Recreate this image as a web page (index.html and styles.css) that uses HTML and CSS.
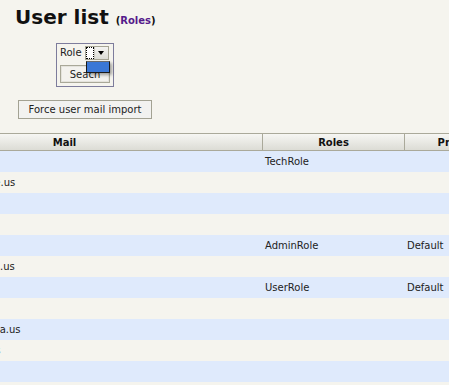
FILE: index.html
```html
<!DOCTYPE html>
<html>
<head>
<meta charset="utf-8">
<title>User list</title>
<link rel="stylesheet" href="styles.css">
</head>
<body>
<div class="page">
  <h1 class="title">User list <span class="sub">(<a href="#" class="sub-link">Roles</a>)</span></h1>

  <form class="filter">
    <div class="filter-row">
      <label class="filter-label">Role</label>
      <div class="select">
        <span class="select-value"></span>
        <span class="select-btn"><span class="arrow"></span></span>
      </div>
    </div>
    <button type="button" class="btn btn-search">Seach</button>
    <div class="dropdown"><div class="dropdown-item"></div></div>
  </form>

  <button type="button" class="btn btn-import">Force user mail import</button>

  <div class="table-wrap">
    <table class="users">
      <thead>
        <tr>
          <th class="c-mail">Mail</th>
          <th class="c-roles">Roles</th>
          <th class="c-profile">Profile</th>
        </tr>
      </thead>
      <tbody>
        <tr class="odd"><td class="c-mail">tech@corp.us</td><td>TechRole</td><td></td></tr>
        <tr class="even"><td class="c-mail">michiel.johnson@example.us</td><td></td><td></td></tr>
        <tr class="odd"><td class="c-mail">ann@corp.us</td><td></td><td></td></tr>
        <tr class="even"><td class="c-mail">bob@corp.us</td><td></td><td></td></tr>
        <tr class="odd"><td class="c-mail">admin@corp.us</td><td>AdminRole</td><td>Default</td></tr>
        <tr class="even"><td class="c-mail">williams.robinson@canton.us</td><td></td><td></td></tr>
        <tr class="odd"><td class="c-mail">user@corp.us</td><td>UserRole</td><td>Default</td></tr>
        <tr class="even"><td class="c-mail">joe@corp.us</td><td></td><td></td></tr>
        <tr class="odd"><td class="c-mail">roberto.thompson@nevada.us</td><td></td><td></td></tr>
        <tr class="even"><td class="c-mail">marie.jones@university.us</td><td></td><td></td></tr>
        <tr class="odd"><td class="c-mail">kim@corp.us</td><td></td><td></td></tr>
        <tr class="even"><td class="c-mail">lee@corp.us</td><td></td><td></td></tr>
        <tr class="odd"><td class="c-mail">sam@corp.us</td><td></td><td></td></tr>
      </tbody>
    </table>
  </div>
</div>
</body>
</html>
```

FILE: styles.css
```css
html, body {
  margin: 0;
  padding: 0;
  overflow: hidden;
  background: #f5f4ee;
}

body {
  font-family: "DejaVu Sans", Verdana, sans-serif;
  font-size: 10px;
  color: #222;
}

.page {
  width: 449px;
}

.title {
  margin: 0;
  padding: 5px 0 0 15px;
  font-size: 20px;
  line-height: 24px;
  height: 24px;
  font-weight: bold;
  color: #111;
}

.sub {
  font-size: 10px;
  line-height: 10px;
  font-weight: bold;
  color: #111;
}

.sub-link {
  color: #551a8b;
  text-decoration: none;
}

/* filter box */
.filter {
  position: relative;
  box-sizing: content-box;
  width: 50px;
  margin: 14px 0 0 56px;
  padding: 2px 3px 3px 3px;
  border: 1px solid #7d7c9c;
  display: flex;
  flex-direction: column;
  gap: 5px;
}

.filter-row {
  display: flex;
  align-items: center;
  gap: 3px;
  height: 14px;
}

.filter-label {
  line-height: 14px;
}

.select {
  box-sizing: border-box;
  width: 24px;
  height: 14px;
  border: 1px solid #a5a494;
  display: flex;
  background: #fff;
}

.select-value {
  box-sizing: border-box;
  width: 8px;
  height: 100%;
  border: 1px dotted #000;
  background: #fff;
}

.select-btn {
  flex: 1;
  display: flex;
  align-items: center;
  justify-content: center;
  background: linear-gradient(#f4f4f2, #dcdcd6);
  border-left: 1px solid #c8c8c0;
}

.arrow {
  width: 0;
  height: 0;
  border-left: 3px solid transparent;
  border-right: 3px solid transparent;
  border-top: 4px solid #000;
}

.btn {
  font-family: "DejaVu Sans", Verdana, sans-serif;
  font-size: 10px;
  color: #222;
  padding: 0;
  margin: 0;
  box-sizing: border-box;
  text-align: center;
}

.btn-search {
  width: 50px;
  height: 18px;
  background: #f3f2ee;
  border: 1px solid #a9a898;
  box-shadow: inset 0 0 0 1px #e4e3dc;
}

.dropdown {
  position: absolute;
  left: 29px;
  top: 17px;
  width: 24px;
  height: 12px;
  box-sizing: border-box;
  border: 1px solid #1a1a1a;
  border-top-color: #6a6a6a;
  background: #3a77d6;
  box-shadow: 2px 2px 3px rgba(0, 0, 0, 0.35);
}

.dropdown-item {
  height: 100%;
}

.btn-import {
  display: block;
  width: 134px;
  height: 19px;
  margin: 13px 0 0 18px;
  background: #f2f2f0;
  border: 1px solid #a3a293;
}

/* table */
.table-wrap {
  margin-top: 14px;
  width: 449px;
  overflow: hidden;
}

.users {
  margin-left: -133px;
  border-collapse: separate;
  border-spacing: 0;
  table-layout: fixed;
  width: 640px;
}

.users th,
.users td {
  box-sizing: border-box;
  padding: 0 2px;
  white-space: nowrap;
  overflow: hidden;
  text-align: left;
}

.users th {
  height: 18px;
  font-weight: bold;
  text-align: center;
  color: #111;
  background: linear-gradient(#f6f6f3, #dcdcd5);
  border-top: 1px solid #aaa99a;
  border-bottom: 1px solid #aaa99a;
}

.users th + th {
  border-left: 1px solid #aaa99a;
}

.users .c-mail {
  width: 395px;
}

.users th.c-roles {
  width: 142px;
}

.users th.c-profile {
  width: 103px;
}

.users td {
  height: 21px;
  line-height: 21px;
}

.users td + td {
  padding-left: 3px;
}

.users tr.odd td {
  background: #dfeafc;
}

.users tr.even td {
  background: #f5f4ee;
}
```
